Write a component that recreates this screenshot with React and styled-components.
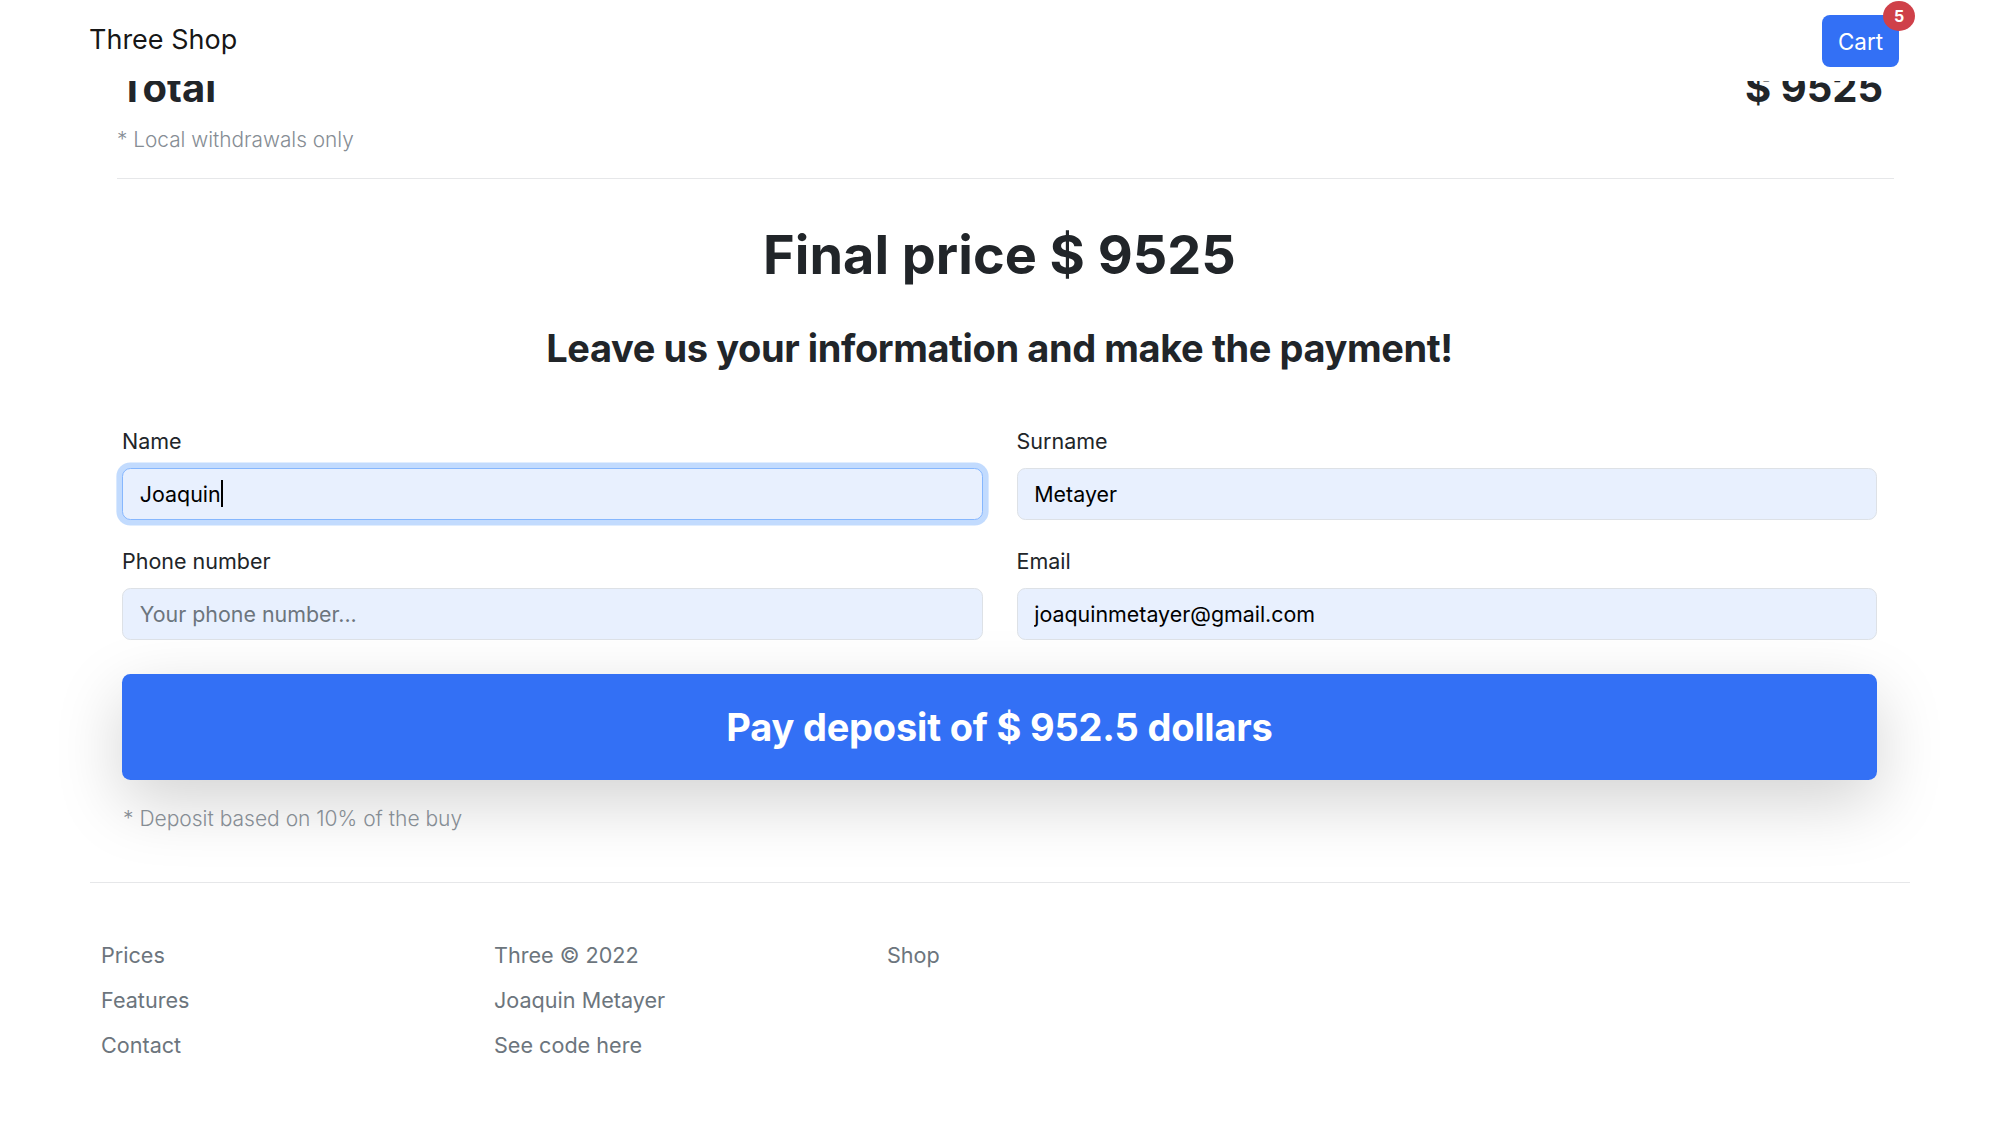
import React from "react";
import styled, { createGlobalStyle } from "styled-components";

const GlobalStyle = createGlobalStyle`
  * { box-sizing: border-box; }
  html, body { margin: 0; padding: 0; background: #ffffff; }
  body {
    font-family: Inter, "Noto Sans", "Liberation Sans", sans-serif;
    color: #212529;
    font-size: 22.4px;
    line-height: 1.5;
  }
`;

const NavBar = styled.nav`
  position: fixed;
  top: 0;
  left: 0;
  right: 0;
  height: 81px;
  background: #ffffff;
  display: flex;
  align-items: center;
  justify-content: space-between;
  padding: 0 101px 0 89px;
  z-index: 10;
`;

const Brand = styled.a`
  font-size: 27px;
  line-height: 1.5;
  color: rgba(0, 0, 0, 0.92);
  text-decoration: none;
`;

const CartButton = styled.button`
  position: relative;
  height: 52px;
  padding: 3px 16px 0;
  border: none;
  border-radius: 8px;
  background: #3370f5;
  color: #ffffff;
  font-family: inherit;
  font-size: 22.4px;
  line-height: 1;
`;

const Badge = styled.span`
  position: absolute;
  top: -14px;
  right: -16px;
  width: 32px;
  height: 30px;
  border-radius: 50%;
  background: #cf4049;
  color: #ffffff;
  font-size: 16px;
  font-weight: 700;
  display: flex;
  align-items: center;
  justify-content: center;
`;

const Main = styled.main`
  padding-top: 64px;
`;

const Container = styled.div`
  max-width: 1820px;
  margin: 0 auto;
`;

const Summary = styled.section`
  margin: 0 16px 0 27px;
`;

const TotalRow = styled.div`
  display: flex;
  justify-content: space-between;
  padding: 0 11px 0 2px;
  font-size: 40px;
  font-weight: 700;
  line-height: 48px;
`;

const Note = styled.p`
  margin: ${(p) => p.$top || 0}px 0 0 ${(p) => p.$left || 0}px;
  font-size: ${(p) => p.$size || 20.8}px;
  font-weight: 300;
  line-height: 33.6px;
  color: #868d94;
`;

const Divider = styled.hr`
  margin: ${(p) => p.$top || 0}px 0 0;
  border: none;
  border-top: 1.4px solid #e6e7e9;
`;

const Checkout = styled.section`
  padding: 0 17px 0 5px;
`;

const FinalPrice = styled.h1`
  margin: 42px 0 0;
  text-align: center;
  font-size: 54px;
  font-weight: 700;
  line-height: 67px;
  color: #212529;
`;

const Lead = styled.h3`
  margin: 37px 0 0;
  text-align: center;
  font-size: 38px;
  font-weight: 700;
  line-height: 47px;
  letter-spacing: -0.4px;
  color: #212529;
`;

const FormGrid = styled.form`
  margin-top: 54px;
  display: grid;
  grid-template-columns: 1fr 1fr;
  column-gap: 34px;
  row-gap: 26px;
`;

const Field = styled.div`
  position: relative;
  display: flex;
  flex-direction: column;
`;

const Label = styled.label`
  font-size: 21.5px;
  line-height: 30px;
  color: #212529;
  margin-bottom: 12px;
`;

const Input = styled.input`
  height: 52px;
  width: 100%;
  padding: 0 16.8px;
  font-family: inherit;
  font-size: 21.4px;
  color: #000000;
  background: #e8f0fe;
  border: 1.4px solid ${(p) => (p.$focused ? "#86b7fe" : "#dde1e6")};
  border-radius: 8.4px;
  box-shadow: ${(p) =>
    p.$focused ? "0 0 0 5.6px rgba(13, 110, 253, 0.25)" : "none"};
  outline: none;
  caret-color: transparent;
  &::placeholder {
    color: #6c757d;
  }
`;

const Caret = styled.span`
  position: absolute;
  left: 99px;
  bottom: 13px;
  width: 1.5px;
  height: 27px;
  background: #000000;
  pointer-events: none;
`;

const PayButton = styled.button`
  margin-top: 34px;
  width: 100%;
  height: 106px;
  border: none;
  border-radius: 8.4px;
  background: #3370f5;
  color: #ffffff;
  font-family: inherit;
  font-size: 38px;
  font-weight: 700;
  letter-spacing: -0.2px;
  box-shadow: 0 22px 67px rgba(0, 0, 0, 0.175);
`;

const Footer = styled.footer`
  margin-top: 47px;
`;

const FooterGrid = styled.div`
  display: grid;
  grid-template-columns: repeat(3, 393px);
  padding: 56px 0 0 11px;
`;

const FooterColumn = styled.ul`
  list-style: none;
  margin: 0;
  padding: 0;
  display: flex;
  flex-direction: column;
  gap: 11.4px;
`;

const FooterLink = styled.li`
  font-size: 21.6px;
  line-height: 33.6px;
  color: #6c757d;
`;

export default function App() {
  return (
    <>
      <GlobalStyle />
      <NavBar>
        <Brand href="#">Three Shop</Brand>
        <CartButton type="button">
          Cart
          <Badge>5</Badge>
        </CartButton>
      </NavBar>
      <Main>
        <Container>
          <Summary>
            <TotalRow>
              <span>Total</span>
              <span>$ 9525</span>
            </TotalRow>
            <Note $top={11}>* Local withdrawals only</Note>
            <Divider $top={21} />
            <Checkout>
              <FinalPrice>Final price $ 9525</FinalPrice>
              <Lead>Leave us your information and make the payment!</Lead>
              <FormGrid onSubmit={(e) => e.preventDefault()}>
                <Field>
                  <Label htmlFor="name">Name</Label>
                  <Input id="name" defaultValue="Joaquin" $focused />
                  <Caret />
                </Field>
                <Field>
                  <Label htmlFor="surname">Surname</Label>
                  <Input id="surname" defaultValue="Metayer" />
                </Field>
                <Field>
                  <Label htmlFor="phone">Phone number</Label>
                  <Input id="phone" placeholder="Your phone number..." />
                </Field>
                <Field>
                  <Label htmlFor="email">Email</Label>
                  <Input id="email" defaultValue="joaquinmetayer@gmail.com" />
                </Field>
              </FormGrid>
              <PayButton type="button">Pay deposit of $ 952.5 dollars</PayButton>
              <Note $top={22} $left={1} $size={21}>
                * Deposit based on 10% of the buy
              </Note>
            </Checkout>
          </Summary>
          <Footer>
            <Divider />
            <FooterGrid>
              <FooterColumn>
                <FooterLink>Prices</FooterLink>
                <FooterLink>Features</FooterLink>
                <FooterLink>Contact</FooterLink>
              </FooterColumn>
              <FooterColumn>
                <FooterLink>Three © 2022</FooterLink>
                <FooterLink>Joaquin Metayer</FooterLink>
                <FooterLink>See code here</FooterLink>
              </FooterColumn>
              <FooterColumn>
                <FooterLink>Shop</FooterLink>
              </FooterColumn>
            </FooterGrid>
          </Footer>
        </Container>
      </Main>
    </>
  );
}
